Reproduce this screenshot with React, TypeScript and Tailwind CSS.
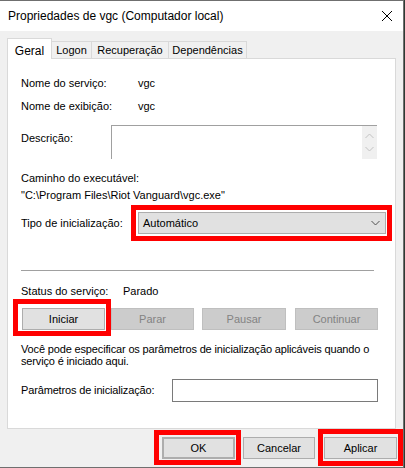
import React from "react";

const font = { fontFamily: '"Liberation Sans", Arial, sans-serif' };

function Highlight({ className }: { className: string }) {
  return <span className={`pointer-events-none absolute border-[5px] border-[#ff0000] ${className}`} />;
}

function Btn({
  label,
  width,
  disabled,
  className = "",
  children,
}: {
  label: string;
  width: string;
  disabled?: boolean;
  className?: string;
  children?: React.ReactNode;
}) {
  return (
    <div
      className={`relative flex h-[22px] shrink-0 items-center justify-center border text-[11px] ${width} ${
        disabled ? "border-[#bfbfbf] bg-[#cccccc] text-[#838383]" : "border-[#adadad] bg-[#e1e1e1] text-black"
      } ${className}`}
    >
      {label}
      {children}
    </div>
  );
}

function Chevron({ up, color }: { up?: boolean; color: string }) {
  return (
    <svg width="9" height="6" viewBox="0 0 9 6" fill="none">
      <path d={up ? "M0.5 5 L4.5 1 L8.5 5" : "M0.5 1 L4.5 5 L8.5 1"} stroke={color} strokeWidth="1" />
    </svg>
  );
}

export default function App() {
  const tabs = [
    { label: "Logon", w: "w-[40px]" },
    { label: "Recuperação", w: "w-[77px]" },
    { label: "Dependências", w: "w-[78px]" },
  ];

  return (
    <div style={font} className="h-[468px] w-[405px] overflow-hidden bg-[#2f3a33] text-[11px] text-black">
      <div className="flex h-[468px] w-[404px] flex-col border-b border-r border-t border-[#6f6f6f] bg-[#f0f0f0]">
        {/* title bar */}
        <div className="flex h-[30px] shrink-0 items-center justify-between bg-white pl-[8px] pr-[11px]">
          <span className="text-[12px]">Propriedades de vgc (Computador local)</span>
          <svg width="10" height="10" viewBox="0 0 10 10">
            <path d="M0 0 L10 10 M10 0 L0 10" stroke="#000" strokeWidth="1" />
          </svg>
        </div>

        {/* tabs */}
        <div className="ml-[7px] mt-[7px] flex h-[20px] items-end">
          <div className="relative z-10 -mb-px flex h-[21px] w-[45px] items-start justify-center border border-b-0 border-[#d9d9d9] bg-white pt-[3px] text-[12px]">
            Geral
          </div>
          {tabs.map((t) => (
            <div
              key={t.label}
              className={`flex h-[17px] ${t.w} items-center justify-center border border-b-0 border-l-0 border-[#d9d9d9] bg-[#f0f0f0]`}
            >
              {t.label}
            </div>
          ))}
        </div>

        {/* panel */}
        <div className="ml-[7px] h-[371px] w-[389px] border border-[#d9d9d9] bg-white pl-[13px]">
          <div className="mt-[17px] flex h-[14px] items-center">
            <span className="w-[117px]">Nome do serviço:</span>
            <span>vgc</span>
          </div>
          <div className="mt-[9px] flex h-[14px] items-center">
            <span className="w-[117px]">Nome de exibição:</span>
            <span>vgc</span>
          </div>
          <div className="mt-[12px] flex items-start">
            <span className="mt-[5px] w-[90px]">Descrição:</span>
            <div className="flex h-[34px] w-[266px] border-l border-t border-[#a0a0a0]">
              <div className="flex-1" />
              <div className="flex w-[15px] flex-col items-center justify-around bg-[#f0f0f0] py-[3px]">
                <Chevron up color="#c2c2c2" />
                <Chevron color="#c2c2c2" />
              </div>
            </div>
          </div>
          <div className="mt-[12px] h-[14px] leading-[14px]">Caminho do executável:</div>
          <div className="mt-[3px] h-[14px] leading-[14px]">"C:\Program Files\Riot Vanguard\vgc.exe"</div>
          <div className="mt-[10px] flex items-center">
            <span className="w-[117px]">Tipo de inicialização:</span>
            <div className="relative flex h-[22px] w-[248px] items-center justify-between border border-[#adadad] bg-[#e1e1e1] pl-[4px] pr-[5px]">
              <span>Automático</span>
              <Chevron color="#505050" />
              <Highlight className="-bottom-[8px] -left-[8px] -right-[7px] -top-[8px]" />
            </div>
          </div>
          <div className="mt-[36px] h-px w-[353px] bg-[#a0a0a0]" />
          <div className="mt-[13px] flex h-[14px] items-center">
            <span className="w-[102px]">Status do serviço:</span>
            <span>Parado</span>
          </div>
          <div className="mt-[10px] flex">
            <Btn label="Iniciar" width="w-[83px]" className="ml-px">
              <Highlight className="-bottom-[7px] -left-[10px] -right-[7px] -top-[10px]" />
            </Btn>
            <Btn label="Parar" width="w-[83px]" disabled className="ml-[6px]" />
            <Btn label="Pausar" width="w-[84px]" disabled className="ml-[8px]" />
            <Btn label="Continuar" width="w-[83px]" disabled className="ml-[9px]" />
          </div>
          <div className="mt-[13px] leading-[12px] tracking-[-0.15px]">
            Você pode especificar os parâmetros de inicialização aplicáveis quando o
            <br />
            serviço é iniciado aqui.
          </div>
          <div className="mt-[12px] flex items-center">
            <span className="w-[151px] tracking-[-0.15px]">Parâmetros de inicialização:</span>
            <div className="h-[23px] w-[206px] border border-[#7a7a7a] bg-white" />
          </div>
        </div>

        {/* dialog buttons */}
        <div className="mt-[8px] flex pl-[162px]">
          <Btn label="OK" width="w-[73px]" className="border-2 border-[#0078d7]">
            <Highlight className="-bottom-[8px] -left-[10px] -right-[8px] -top-[9px]" />
          </Btn>
          <Btn label="Cancelar" width="w-[72px]" className="ml-[8px]" />
          <Btn label="Aplicar" width="w-[73px]" className="ml-[9px]">
            <Highlight className="-bottom-[8px] -left-[7px] -right-[7px] -top-[9px]" />
          </Btn>
        </div>
      </div>
    </div>
  );
}
